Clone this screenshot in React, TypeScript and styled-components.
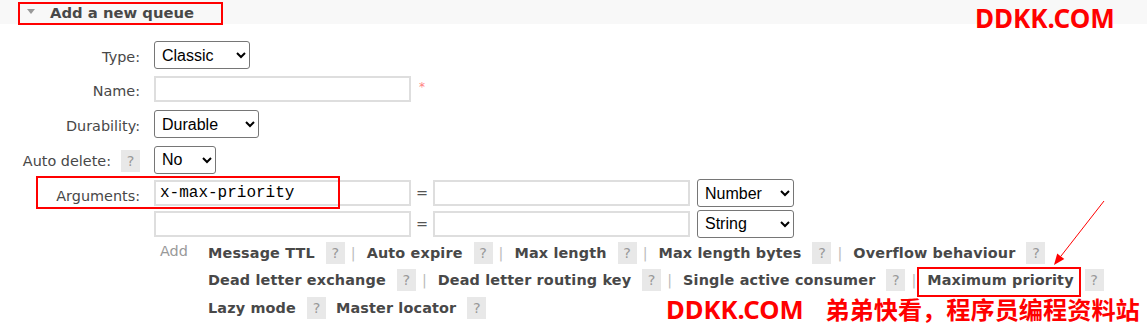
import React from "react";
import styled, { createGlobalStyle } from "styled-components";

const GlobalStyle = createGlobalStyle`
  html, body { margin: 0; padding: 0; background: #fff; }
  body { font-family: "DejaVu Sans", Verdana, sans-serif; }
`;

const Page = styled.div`
  position: relative;
  width: 1147px;
  height: 326px;
  overflow: hidden;
  background: #fff;
  color: #484848;
  font-size: 14.4px;
`;

const SectionHeader = styled.div`
  height: 24px;
  background: #f8f8f8;
  display: flex;
  align-items: center;
  padding-left: 27px;
  gap: 15px;
`;

const Toggle = styled.span`
  width: 0;
  height: 0;
  border-left: 4px solid transparent;
  border-right: 4px solid transparent;
  border-top: 5px solid #999;
  margin-top: -2px;
`;

const Title = styled.h2`
  margin: 0;
  font-size: 14.8px;
  font-weight: bold;
  color: #484848;
`;

const Form = styled.div`
  padding-top: 14px;
`;

const Row = styled.div<{ $h: number; $top?: boolean }>`
  display: grid;
  grid-template-columns: 141px 1fr;
  column-gap: 13px;
  align-items: ${p => (p.$top ? "start" : "center")};
  height: ${p => p.$h}px;
`;

const Label = styled.label<{ $h?: number }>`
  display: flex;
  justify-content: flex-end;
  align-items: center;
  gap: 10px;
  padding-top: 3px;
  padding-right: 1px;
  white-space: nowrap;
  height: ${p => (p.$h ? `${p.$h}px` : "auto")};
`;

const Field = styled.div`
  display: flex;
  align-items: center;
`;

const Select = styled.select<{ $w: number }>`
  box-sizing: border-box;
  width: ${p => p.$w}px;
  height: 28px;
  font: 16px "Liberation Sans", Arial, sans-serif;
  color: #000;
  border: 1px solid #767676;
  border-radius: 3px;
  background: #fff;
  padding: 0 3px;
`;

const TextInput = styled.input`
  box-sizing: border-box;
  width: 257px;
  height: 26px;
  border: 2px solid #dedede;
  padding: 0 4px;
  font: 16px "Liberation Mono", "Courier New", monospace;
  color: #000;
  outline: none;
  background: #fff;
`;

const Required = styled.span`
  color: #ff8080;
  font-size: 12px;
  margin-left: 8px;
  margin-top: -4px;
`;

const Help = styled.span<{ $ml?: number }>`
  display: inline-flex;
  align-items: center;
  justify-content: center;
  width: 19px;
  height: 22px;
  margin-left: ${p => p.$ml ?? 0}px;
  background: #e8e8e8;
  color: #999;
  font-size: 14.4px;
  font-weight: normal;
  letter-spacing: 0;
`;

const ArgLines = styled.div`
  display: flex;
  flex-direction: column;
`;

const ArgLine = styled.div<{ $h: number }>`
  display: flex;
  align-items: center;
  height: ${p => p.$h}px;
`;

const Equals = styled.span`
  width: 22px;
  text-align: center;
  color: #555;
`;

const TypeSelect = styled(Select)`
  margin-left: 7px;
`;

const AddArea = styled.div`
  display: grid;
  grid-template-columns: 141px 1fr;
  column-gap: 13px;
  padding-top: 1px;
`;

const AddCell = styled.div`
  display: flex;
`;

const AddLabel = styled.span`
  width: 48px;
  padding-left: 6px;
  padding-top: 4px;
  color: #999;
`;

const LinkLines = styled.div`
  display: flex;
  flex-direction: column;
`;

const LinkLine = styled.div`
  display: flex;
  align-items: center;
  height: 27.5px;
  white-space: nowrap;
`;

const ArgLink = styled.span<{ $ml?: number }>`
  font-weight: bold;
  color: #484848;
  letter-spacing: 0.15px;
  margin-left: ${p => p.$ml ?? 0}px;
`;

const Sep = styled.span`
  color: #bbb;
  margin: 0 11px 0 6px;
`;

const Callout = styled.div<{ $x: number; $y: number; $w: number; $h: number }>`
  position: absolute;
  left: ${p => p.$x}px;
  top: ${p => p.$y}px;
  width: ${p => p.$w}px;
  height: ${p => p.$h}px;
  box-sizing: border-box;
  border: 2px solid #ff0000;
  pointer-events: none;
`;

const Watermark = styled.div<{ $x: number; $y: number; $size: number }>`
  position: absolute;
  left: ${p => p.$x}px;
  top: ${p => p.$y}px;
  font-family: "Noto Sans", "Noto Sans CJK SC", sans-serif;
  font-size: ${p => p.$size}px;
  font-weight: 700;
  line-height: 1;
  color: #ff0000;
  white-space: nowrap;
`;

const WatermarkCjk = styled.span`
  font-family: "Noto Sans CJK SC", sans-serif;
  font-size: 24.2px;
  margin-left: 15px;
`;

const Arrow = styled.svg`
  position: absolute;
  left: 1048px;
  top: 196px;
  width: 62px;
  height: 74px;
  overflow: visible;
`;

function Option({ label, sep = true }: { label: string; sep?: boolean }) {
  return (
    <>
      <ArgLink>{label}</ArgLink>
      <Help $ml={11}>?</Help>
      {sep && <Sep>|</Sep>}
    </>
  );
}

export default function App() {
  return (
    <Page>
      <GlobalStyle />
      <SectionHeader>
        <Toggle />
        <Title>Add a new queue</Title>
      </SectionHeader>

      <Form>
        <Row $h={34}>
          <Label>Type:</Label>
          <Field>
            <Select $w={96} defaultValue="classic">
              <option value="classic">Classic</option>
              <option value="quorum">Quorum</option>
            </Select>
          </Field>
        </Row>
        <Row $h={34}>
          <Label>Name:</Label>
          <Field>
            <TextInput type="text" defaultValue="" />
            <Required>*</Required>
          </Field>
        </Row>
        <Row $h={36}>
          <Label>Durability:</Label>
          <Field>
            <Select $w={105} defaultValue="durable">
              <option value="durable">Durable</option>
              <option value="transient">Transient</option>
            </Select>
          </Field>
        </Row>
        <Row $h={35}>
          <Label>
            Auto delete: <Help>?</Help>
          </Label>
          <Field>
            <Select $w={62} defaultValue="no">
              <option value="no">No</option>
              <option value="yes">Yes</option>
            </Select>
          </Field>
        </Row>
        <Row $h={61} $top>
          <Label $h={32}>Arguments:</Label>
          <ArgLines>
            <ArgLine $h={32}>
              <TextInput type="text" defaultValue="x-max-priority" />
              <Equals>=</Equals>
              <TextInput type="text" defaultValue="" />
              <TypeSelect $w={97} defaultValue="number">
                <option value="string">String</option>
                <option value="number">Number</option>
                <option value="list">List</option>
              </TypeSelect>
            </ArgLine>
            <ArgLine $h={29}>
              <TextInput type="text" defaultValue="" />
              <Equals>=</Equals>
              <TextInput type="text" defaultValue="" />
              <TypeSelect $w={97} defaultValue="string">
                <option value="string">String</option>
                <option value="number">Number</option>
                <option value="list">List</option>
              </TypeSelect>
            </ArgLine>
          </ArgLines>
        </Row>
      </Form>

      <AddArea>
        <span />
        <AddCell>
          <AddLabel>Add</AddLabel>
          <LinkLines>
            <LinkLine>
              <Option label="Message TTL" />
              <Option label="Auto expire" />
              <Option label="Max length" />
              <Option label="Max length bytes" />
              <Option label="Overflow behaviour" sep={false} />
            </LinkLine>
            <LinkLine>
              <Option label="Dead letter exchange" />
              <Option label="Dead letter routing key" />
              <Option label="Single active consumer" />
              <Option label="Maximum priority" sep={false} />
            </LinkLine>
            <LinkLine>
              <ArgLink>Lazy mode</ArgLink>
              <Help $ml={11}>?</Help>
              <ArgLink $ml={10}>Master locator</ArgLink>
              <Help $ml={11}>?</Help>
            </LinkLine>
          </LinkLines>
        </AddCell>
      </AddArea>

      <Callout $x={18} $y={2} $w={205} $h={23} />
      <Callout $x={36} $y={176} $w={304} $h={33} />
      <Callout $x={917} $y={267} $w={164} $h={30} />

      <Arrow viewBox="0 0 62 74">
        <line x1="56" y1="5" x2="12.8" y2="60.3" stroke="#ff0000" strokeWidth="1" />
        <polygon points="6,69 16.3,63.1 9.2,57.6" fill="#ff0000" />
      </Arrow>

      <Watermark $x={975} $y={5} $size={26}>DDKK.COM</Watermark>
      <Watermark $x={666} $y={297} $size={25.6}>
        DDKK.COM <WatermarkCjk>弟弟快看，程序员编程资料站</WatermarkCjk>
      </Watermark>
    </Page>
  );
}
